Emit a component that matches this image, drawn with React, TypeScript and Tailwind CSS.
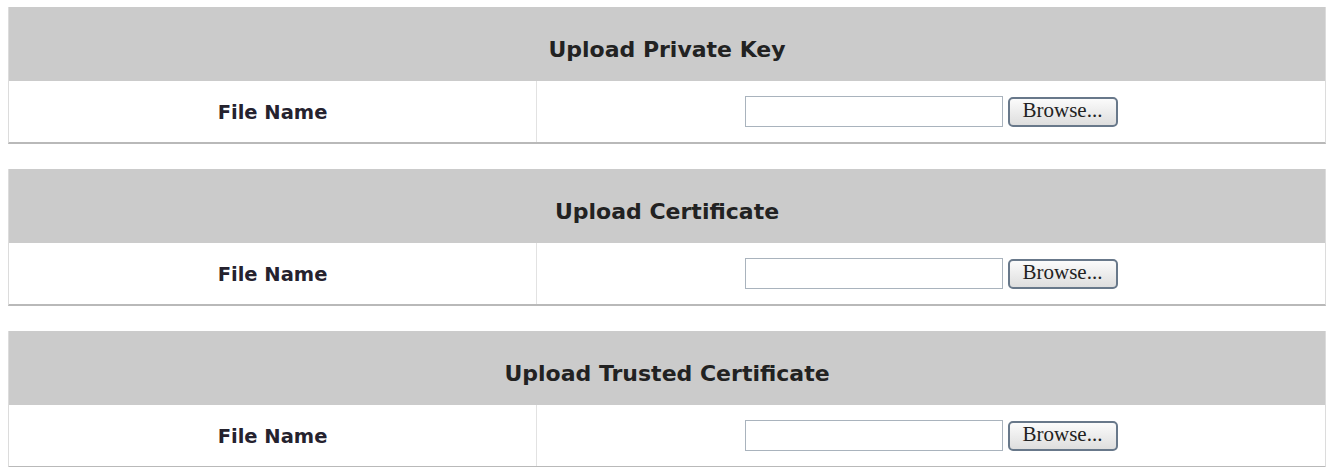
const SECTIONS = ['Upload Private Key', 'Upload Certificate', 'Upload Trusted Certificate'];

function UploadTable({ title }: { title: string }) {
  return (
    <div className="border-l border-r border-[#dcdcdc] border-b-2 border-b-[#b9b9b9]">
      <div className="h-[74px] bg-[#cbcbcb] flex items-center justify-center pt-[12px]">
        <span className="text-[22px] font-bold text-[#222] leading-none">{title}</span>
      </div>
      <div className="h-[61px] flex bg-white">
        <div className="w-[528px] flex items-center justify-center border-r border-[#e2e2e2] pt-[2px]">
          <span className="text-[19.5px] font-bold text-[#25222e] leading-none">File Name</span>
        </div>
        <div className="flex-1 flex items-center justify-center gap-[5px]">
          <input
            type="text"
            className="w-[258px] h-[31px] border border-[#a9b3bd] bg-white outline-none"
          />
          <button
            className="w-[110px] h-[30px] rounded-[5px] border-2 border-[#68788a] bg-gradient-to-b from-[#fbfbfb] to-[#dedede] text-[21px] text-[#222] leading-none pb-[2px]"
            style={{ fontFamily: '"Liberation Serif", serif' }}
          >
            Browse...
          </button>
        </div>
      </div>
    </div>
  );
}

export default function App() {
  return (
    <div
      className="w-[1334px] h-[467px] bg-white px-[8px] pt-[7px] flex flex-col gap-[25px] overflow-hidden"
      style={{ fontFamily: '"DejaVu Sans", Verdana, sans-serif' }}
    >
      {SECTIONS.map((s) => (
        <UploadTable key={s} title={s} />
      ))}
    </div>
  );
}
